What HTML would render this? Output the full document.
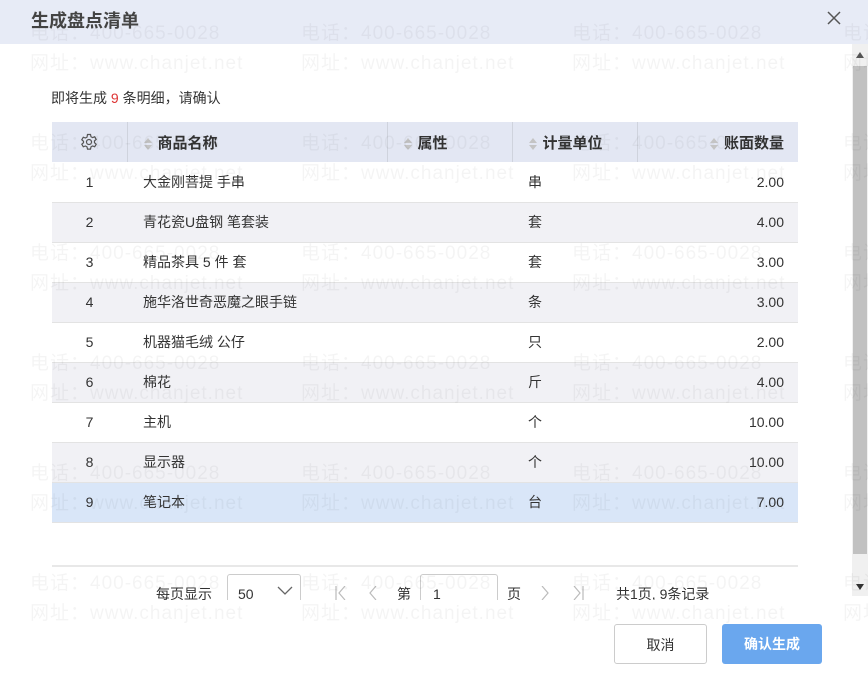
<!DOCTYPE html>
<html style="overflow:hidden"><head><meta charset="utf-8"><style>
*{margin:0;padding:0;box-sizing:border-box}
html,body{width:868px;height:678px;overflow:hidden}
body{background:#fff;font-family:"Liberation Sans","Noto Sans CJK SC",sans-serif;color:#333;position:relative;font-size:14px}
.hdr{position:absolute;left:0;top:0;width:868px;height:44px;background:#e7ebf6}
.title{position:absolute;left:31px;top:7px;font-size:18px;font-weight:bold;color:#444}
.close{position:absolute;left:826px;top:10px}
.wm{position:absolute;font-size:19px;color:rgba(0,0,0,0.045);white-space:nowrap;letter-spacing:1px;z-index:5;pointer-events:none}
.info{position:absolute;left:51px;top:88px;font-size:14px}
.info b{color:#d33;font-weight:normal}
table{position:absolute;left:52px;top:122px;width:746px;border-collapse:collapse;font-size:14px}
th{height:40px;background:#e3e7f3;font-weight:bold;text-align:left;border-right:1px solid #cfd3dd;font-size:15px}
th:last-child{border-right:none;text-align:right;padding-right:14px}
td{height:40px;border-bottom:1px solid #e3e3e3}
tr.g td{background:#f1f1f5}
tr.s td{background:#d9e6f8}
.ar{display:inline-block;margin:0 6px 0 16px;vertical-align:middle}
td.n{text-align:center}
td.r{text-align:right;padding-right:14px}
.sb{position:absolute;left:852px;top:44px;width:16px;height:552px;background:#f0f0f0}
.th{position:absolute;left:853px;top:66px;width:14px;height:488px;background:#c1c1c1}
.line{position:absolute;left:52px;top:565px;width:746px;height:2px;background:#e8e8e8}
.pg{position:absolute;top:584px;height:16px;overflow:hidden;font-size:14px;color:#333}
.btn{position:absolute;top:624px;height:40px;border-radius:3px;font-size:14px;text-align:center;line-height:40px}
</style></head><body>
<div class="hdr"></div>
<div class="title">生成盘点清单</div>
<svg class="close" width="16" height="16" viewBox="0 0 16 16"><path d="M2 2L14 14M14 2L2 14" stroke="#555" stroke-width="1.5"/></svg>
<div class="info">即将生成 <b>9</b> 条明细，请确认</div>
<table>
<tr><th style="width:75px;text-align:center"><svg width="18" height="18" viewBox="0 0 18 18" style="vertical-align:middle"><path d="M7.5 1.5h3l.5 2.2 1.6.9 2.1-.8 1.5 2.6-1.7 1.5v1.8l1.7 1.5-1.5 2.6-2.1-.8-1.6.9-.5 2.2h-3l-.5-2.2-1.6-.9-2.1.8-1.5-2.6 1.7-1.5V8.3L1.8 6.8l1.5-2.6 2.1.8 1.6-.9z" fill="none" stroke="#555" stroke-width="1.2"/><circle cx="9" cy="9" r="2.5" fill="none" stroke="#555" stroke-width="1.2"/></svg></th>
<th style="width:260px"><svg class="ar" width="8" height="14"><path d="M4 1L8 6H0zM4 13L8 8H0z" fill="#c4c4c4"/></svg>商品名称</th>
<th style="width:125px"><svg class="ar" width="8" height="14"><path d="M4 1L8 6H0zM4 13L8 8H0z" fill="#c4c4c4"/></svg>属性</th>
<th style="width:125px"><svg class="ar" width="8" height="14"><path d="M4 1L8 6H0zM4 13L8 8H0z" fill="#c4c4c4"/></svg>计量单位</th>
<th><svg class="ar" width="8" height="14" style="margin-left:0"><path d="M4 1L8 6H0zM4 13L8 8H0z" fill="#c4c4c4"/></svg>账面数量</th></tr>
<tr><td class="n">1</td><td style="padding-left:16px">大金刚菩提 手串</td><td></td><td style="padding-left:16px">串</td><td class="r">2.00</td></tr>
<tr class="g"><td class="n">2</td><td style="padding-left:16px">青花瓷U盘钢 笔套装</td><td></td><td style="padding-left:16px">套</td><td class="r">4.00</td></tr>
<tr><td class="n">3</td><td style="padding-left:16px">精品茶具 5 件 套</td><td></td><td style="padding-left:16px">套</td><td class="r">3.00</td></tr>
<tr class="g"><td class="n">4</td><td style="padding-left:16px">施华洛世奇恶魔之眼手链</td><td></td><td style="padding-left:16px">条</td><td class="r">3.00</td></tr>
<tr><td class="n">5</td><td style="padding-left:16px">机器猫毛绒 公仔</td><td></td><td style="padding-left:16px">只</td><td class="r">2.00</td></tr>
<tr class="g"><td class="n">6</td><td style="padding-left:16px">棉花</td><td></td><td style="padding-left:16px">斤</td><td class="r">4.00</td></tr>
<tr><td class="n">7</td><td style="padding-left:16px">主机</td><td></td><td style="padding-left:16px">个</td><td class="r">10.00</td></tr>
<tr class="g"><td class="n">8</td><td style="padding-left:16px">显示器</td><td></td><td style="padding-left:16px">个</td><td class="r">10.00</td></tr>
<tr class="s"><td class="n">9</td><td style="padding-left:16px">笔记本</td><td></td><td style="padding-left:16px">台</td><td class="r">7.00</td></tr>
</table>
<div class="line"></div>
<div class="pg" style="left:156px">每页显示</div>
<div style="position:absolute;left:227px;top:574px;width:74px;height:26px;border:1px solid #ccc;border-bottom:none;border-radius:3px 3px 0 0"></div>
<div class="pg" style="left:238px;top:586px">50</div>
<svg style="position:absolute;left:277px;top:586px" width="16" height="10"><path d="M1 1L8 8L15 1" fill="none" stroke="#666" stroke-width="1.3"/></svg>
<svg style="position:absolute;left:335px;top:586px" width="12" height="14"><path d="M1 0V14M10 0L4 7L10 14" fill="none" stroke="#bbb" stroke-width="1.2"/></svg>
<svg style="position:absolute;left:368px;top:586px" width="10" height="14"><path d="M8 0L2 7L8 14" fill="none" stroke="#bbb" stroke-width="1.2"/></svg>
<div class="pg" style="left:397px">第</div>
<div style="position:absolute;left:420px;top:574px;width:78px;height:26px;border:1px solid #ccc;border-bottom:none;border-radius:3px 3px 0 0"></div>
<div class="pg" style="left:433px;top:586px">1</div>
<div class="pg" style="left:507px">页</div>
<svg style="position:absolute;left:540px;top:586px" width="10" height="14"><path d="M2 0L8 7L2 14" fill="none" stroke="#bbb" stroke-width="1.2"/></svg>
<svg style="position:absolute;left:572px;top:586px" width="12" height="14"><path d="M11 0V14M2 0L8 7L2 14" fill="none" stroke="#bbb" stroke-width="1.2"/></svg>
<div class="pg" style="left:616px">共1页, 9条记录</div>
<div class="btn" style="left:614px;width:93px;border:1px solid #ccc;color:#333">取消</div>
<div class="btn" style="left:722px;width:100px;background:#6aa7ee;color:#fff;font-weight:bold">确认生成</div>
<div class="sb"></div><div class="th"></div>
<svg style="position:absolute;left:856px;top:52px" width="8" height="6"><path d="M4 0L8 6H0z" fill="#555"/></svg>
<svg style="position:absolute;left:856px;top:584px" width="8" height="6"><path d="M4 6L8 0H0z" fill="#333"/></svg>
<div style="position:absolute;left:0;top:0;width:868px;height:678px;overflow:hidden;z-index:5;pointer-events:none">
<div class="wm" style="left:30px;top:18px">电话：400-665-0028</div><div class="wm" style="left:30px;top:48px">网址：www.chanjet.net</div>
<div class="wm" style="left:301px;top:18px">电话：400-665-0028</div><div class="wm" style="left:301px;top:48px">网址：www.chanjet.net</div>
<div class="wm" style="left:572px;top:18px">电话：400-665-0028</div><div class="wm" style="left:572px;top:48px">网址：www.chanjet.net</div>
<div class="wm" style="left:843px;top:18px">电话：400-665-0028</div><div class="wm" style="left:843px;top:48px">网址：www.chanjet.net</div>
<div class="wm" style="left:30px;top:128px">电话：400-665-0028</div><div class="wm" style="left:30px;top:158px">网址：www.chanjet.net</div>
<div class="wm" style="left:301px;top:128px">电话：400-665-0028</div><div class="wm" style="left:301px;top:158px">网址：www.chanjet.net</div>
<div class="wm" style="left:572px;top:128px">电话：400-665-0028</div><div class="wm" style="left:572px;top:158px">网址：www.chanjet.net</div>
<div class="wm" style="left:843px;top:128px">电话：400-665-0028</div><div class="wm" style="left:843px;top:158px">网址：www.chanjet.net</div>
<div class="wm" style="left:30px;top:238px">电话：400-665-0028</div><div class="wm" style="left:30px;top:268px">网址：www.chanjet.net</div>
<div class="wm" style="left:301px;top:238px">电话：400-665-0028</div><div class="wm" style="left:301px;top:268px">网址：www.chanjet.net</div>
<div class="wm" style="left:572px;top:238px">电话：400-665-0028</div><div class="wm" style="left:572px;top:268px">网址：www.chanjet.net</div>
<div class="wm" style="left:843px;top:238px">电话：400-665-0028</div><div class="wm" style="left:843px;top:268px">网址：www.chanjet.net</div>
<div class="wm" style="left:30px;top:348px">电话：400-665-0028</div><div class="wm" style="left:30px;top:378px">网址：www.chanjet.net</div>
<div class="wm" style="left:301px;top:348px">电话：400-665-0028</div><div class="wm" style="left:301px;top:378px">网址：www.chanjet.net</div>
<div class="wm" style="left:572px;top:348px">电话：400-665-0028</div><div class="wm" style="left:572px;top:378px">网址：www.chanjet.net</div>
<div class="wm" style="left:843px;top:348px">电话：400-665-0028</div><div class="wm" style="left:843px;top:378px">网址：www.chanjet.net</div>
<div class="wm" style="left:30px;top:458px">电话：400-665-0028</div><div class="wm" style="left:30px;top:488px">网址：www.chanjet.net</div>
<div class="wm" style="left:301px;top:458px">电话：400-665-0028</div><div class="wm" style="left:301px;top:488px">网址：www.chanjet.net</div>
<div class="wm" style="left:572px;top:458px">电话：400-665-0028</div><div class="wm" style="left:572px;top:488px">网址：www.chanjet.net</div>
<div class="wm" style="left:843px;top:458px">电话：400-665-0028</div><div class="wm" style="left:843px;top:488px">网址：www.chanjet.net</div>
<div class="wm" style="left:30px;top:568px">电话：400-665-0028</div><div class="wm" style="left:30px;top:598px">网址：www.chanjet.net</div>
<div class="wm" style="left:301px;top:568px">电话：400-665-0028</div><div class="wm" style="left:301px;top:598px">网址：www.chanjet.net</div>
<div class="wm" style="left:572px;top:568px">电话：400-665-0028</div><div class="wm" style="left:572px;top:598px">网址：www.chanjet.net</div>
<div class="wm" style="left:843px;top:568px">电话：400-665-0028</div><div class="wm" style="left:843px;top:598px">网址：www.chanjet.net</div>
</div>
</body></html>
